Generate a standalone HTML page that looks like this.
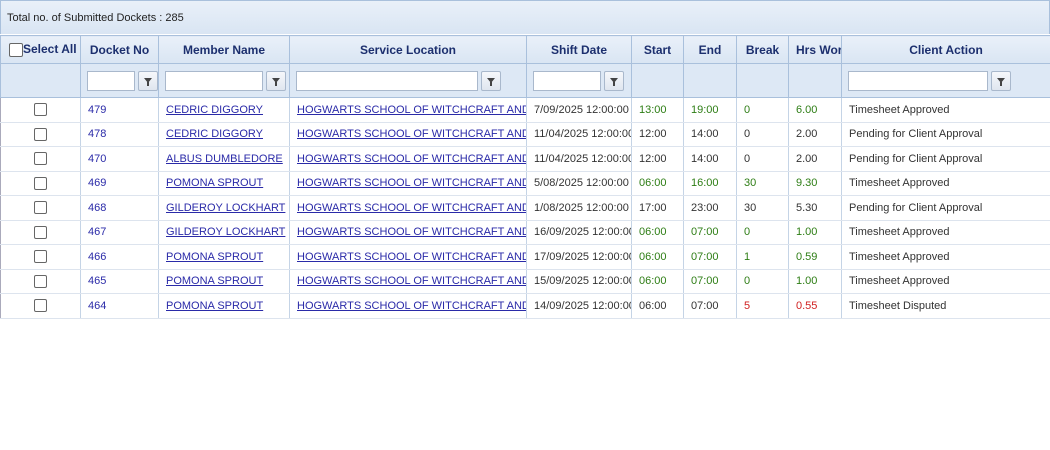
<!DOCTYPE html>
<html><head><style>
body{margin:0;width:1050px;height:450px;background:#fff;font-family:"Liberation Sans",sans-serif;font-size:11px;overflow:hidden;position:relative}
.top{position:absolute;left:0;top:0;height:34px;background:linear-gradient(#e9f0f9,#d9e5f3);border:1px solid #a9c0dc;border-bottom:none;color:#222;font-size:11px;line-height:34px;padding-left:6px;box-sizing:border-box;width:1050px}
table{position:absolute;left:0;top:35px;border-collapse:collapse;table-layout:fixed;width:1050px}
td,th{overflow:hidden;white-space:nowrap;padding:0 0 0 7px;box-sizing:border-box}
th{height:28px;background:linear-gradient(#e9f0f9,#d9e5f3);color:#1c2f6e;font-weight:bold;font-size:12px;text-align:center;border:1px solid #a9c0dc;padding:0}
tr.f td{height:34px;background:#dde8f5;border:1px solid #a9c0dc;padding:0 0 0 6px}
tr.d td{height:24.5px;border-left:1px solid #c5d4e6;border-bottom:1px solid #dde4ee;color:#333}
tr.d td:first-child{border-left:1px solid #aab}
.inp{display:inline-block;vertical-align:middle;background:#fff;border:1px solid #a9b8cc;height:20px;box-sizing:border-box}
.fb{display:inline-block;vertical-align:middle;width:20px;height:20px;margin-left:3px;border:1px solid #a9b8cc;background:linear-gradient(#f6f8fb,#dfe6ef);box-sizing:border-box;position:relative;border-radius:2px}
.fb:after{content:"";position:absolute;left:5px;top:6px;border-left:4px solid transparent;border-right:4px solid transparent;border-top:5px solid #444}
.fb:before{content:"";position:absolute;left:8px;top:10px;width:2px;height:4px;background:#444}
.cb{display:inline-block;width:11px;height:11px;border:1px solid #666;border-radius:2px;background:#fff;vertical-align:middle}
tr.d td.n{color:#2a2aa8}
a{color:#2a2aa8;text-decoration:underline}
tr.d td.g{color:#2d7d14}tr.d td.r{color:#d02020}
</style></head><body>
<div class="top">Total no. of Submitted Dockets : 285</div>
<table>
<colgroup><col style="width:80px"><col style="width:78px"><col style="width:131px"><col style="width:237px"><col style="width:105px"><col style="width:52px"><col style="width:53px"><col style="width:52px"><col style="width:53px"><col style="width:209px"></colgroup>
<tr><th style="text-align:left;padding-left:8px"><span class="cb" style="width:12px;height:12px"></span>Select All</th><th>Docket No</th><th>Member Name</th><th>Service Location</th><th>Shift Date</th><th>Start</th><th>End</th><th>Break</th><th style="text-align:left;padding-left:7px">Hrs Worked</th><th>Client Action</th></tr>
<tr class="f"><td></td><td><span class="inp" style="width:48px"></span><span class="fb"></span></td><td><span class="inp" style="width:98px"></span><span class="fb"></span></td><td><span class="inp" style="width:182px"></span><span class="fb"></span></td><td><span class="inp" style="width:68px"></span><span class="fb"></span></td><td></td><td></td><td></td><td></td><td><span class="inp" style="width:140px"></span><span class="fb"></span></td></tr>
<tr class="d"><td style="text-align:center;padding:0"><span class="cb"></span></td><td class="n">479</td><td><a>CEDRIC DIGGORY</a></td><td><a>HOGWARTS SCHOOL OF WITCHCRAFT AND WIZARDRY</a></td><td>7/09/2025 12:00:00 AM</td><td class="g">13:00</td><td class="g">19:00</td><td class="g">0</td><td class="g">6.00</td><td>Timesheet Approved</td></tr>
<tr class="d"><td style="text-align:center;padding:0"><span class="cb"></span></td><td class="n">478</td><td><a>CEDRIC DIGGORY</a></td><td><a>HOGWARTS SCHOOL OF WITCHCRAFT AND WIZARDRY</a></td><td>11/04/2025 12:00:00 AM</td><td>12:00</td><td>14:00</td><td>0</td><td>2.00</td><td>Pending for Client Approval</td></tr>
<tr class="d"><td style="text-align:center;padding:0"><span class="cb"></span></td><td class="n">470</td><td><a>ALBUS DUMBLEDORE</a></td><td><a>HOGWARTS SCHOOL OF WITCHCRAFT AND WIZARDRY</a></td><td>11/04/2025 12:00:00 AM</td><td>12:00</td><td>14:00</td><td>0</td><td>2.00</td><td>Pending for Client Approval</td></tr>
<tr class="d"><td style="text-align:center;padding:0"><span class="cb"></span></td><td class="n">469</td><td><a>POMONA SPROUT</a></td><td><a>HOGWARTS SCHOOL OF WITCHCRAFT AND WIZARDRY</a></td><td>5/08/2025 12:00:00 AM</td><td class="g">06:00</td><td class="g">16:00</td><td class="g">30</td><td class="g">9.30</td><td>Timesheet Approved</td></tr>
<tr class="d"><td style="text-align:center;padding:0"><span class="cb"></span></td><td class="n">468</td><td><a>GILDEROY LOCKHART</a></td><td><a>HOGWARTS SCHOOL OF WITCHCRAFT AND WIZARDRY</a></td><td>1/08/2025 12:00:00 AM</td><td>17:00</td><td>23:00</td><td>30</td><td>5.30</td><td>Pending for Client Approval</td></tr>
<tr class="d"><td style="text-align:center;padding:0"><span class="cb"></span></td><td class="n">467</td><td><a>GILDEROY LOCKHART</a></td><td><a>HOGWARTS SCHOOL OF WITCHCRAFT AND WIZARDRY</a></td><td>16/09/2025 12:00:00 AM</td><td class="g">06:00</td><td class="g">07:00</td><td class="g">0</td><td class="g">1.00</td><td>Timesheet Approved</td></tr>
<tr class="d"><td style="text-align:center;padding:0"><span class="cb"></span></td><td class="n">466</td><td><a>POMONA SPROUT</a></td><td><a>HOGWARTS SCHOOL OF WITCHCRAFT AND WIZARDRY</a></td><td>17/09/2025 12:00:00 AM</td><td class="g">06:00</td><td class="g">07:00</td><td class="g">1</td><td class="g">0.59</td><td>Timesheet Approved</td></tr>
<tr class="d"><td style="text-align:center;padding:0"><span class="cb"></span></td><td class="n">465</td><td><a>POMONA SPROUT</a></td><td><a>HOGWARTS SCHOOL OF WITCHCRAFT AND WIZARDRY</a></td><td>15/09/2025 12:00:00 AM</td><td class="g">06:00</td><td class="g">07:00</td><td class="g">0</td><td class="g">1.00</td><td>Timesheet Approved</td></tr>
<tr class="d"><td style="text-align:center;padding:0"><span class="cb"></span></td><td class="n">464</td><td><a>POMONA SPROUT</a></td><td><a>HOGWARTS SCHOOL OF WITCHCRAFT AND WIZARDRY</a></td><td>14/09/2025 12:00:00 AM</td><td>06:00</td><td>07:00</td><td class="r">5</td><td class="r">0.55</td><td>Timesheet Disputed</td></tr>
</table>
</body></html>
